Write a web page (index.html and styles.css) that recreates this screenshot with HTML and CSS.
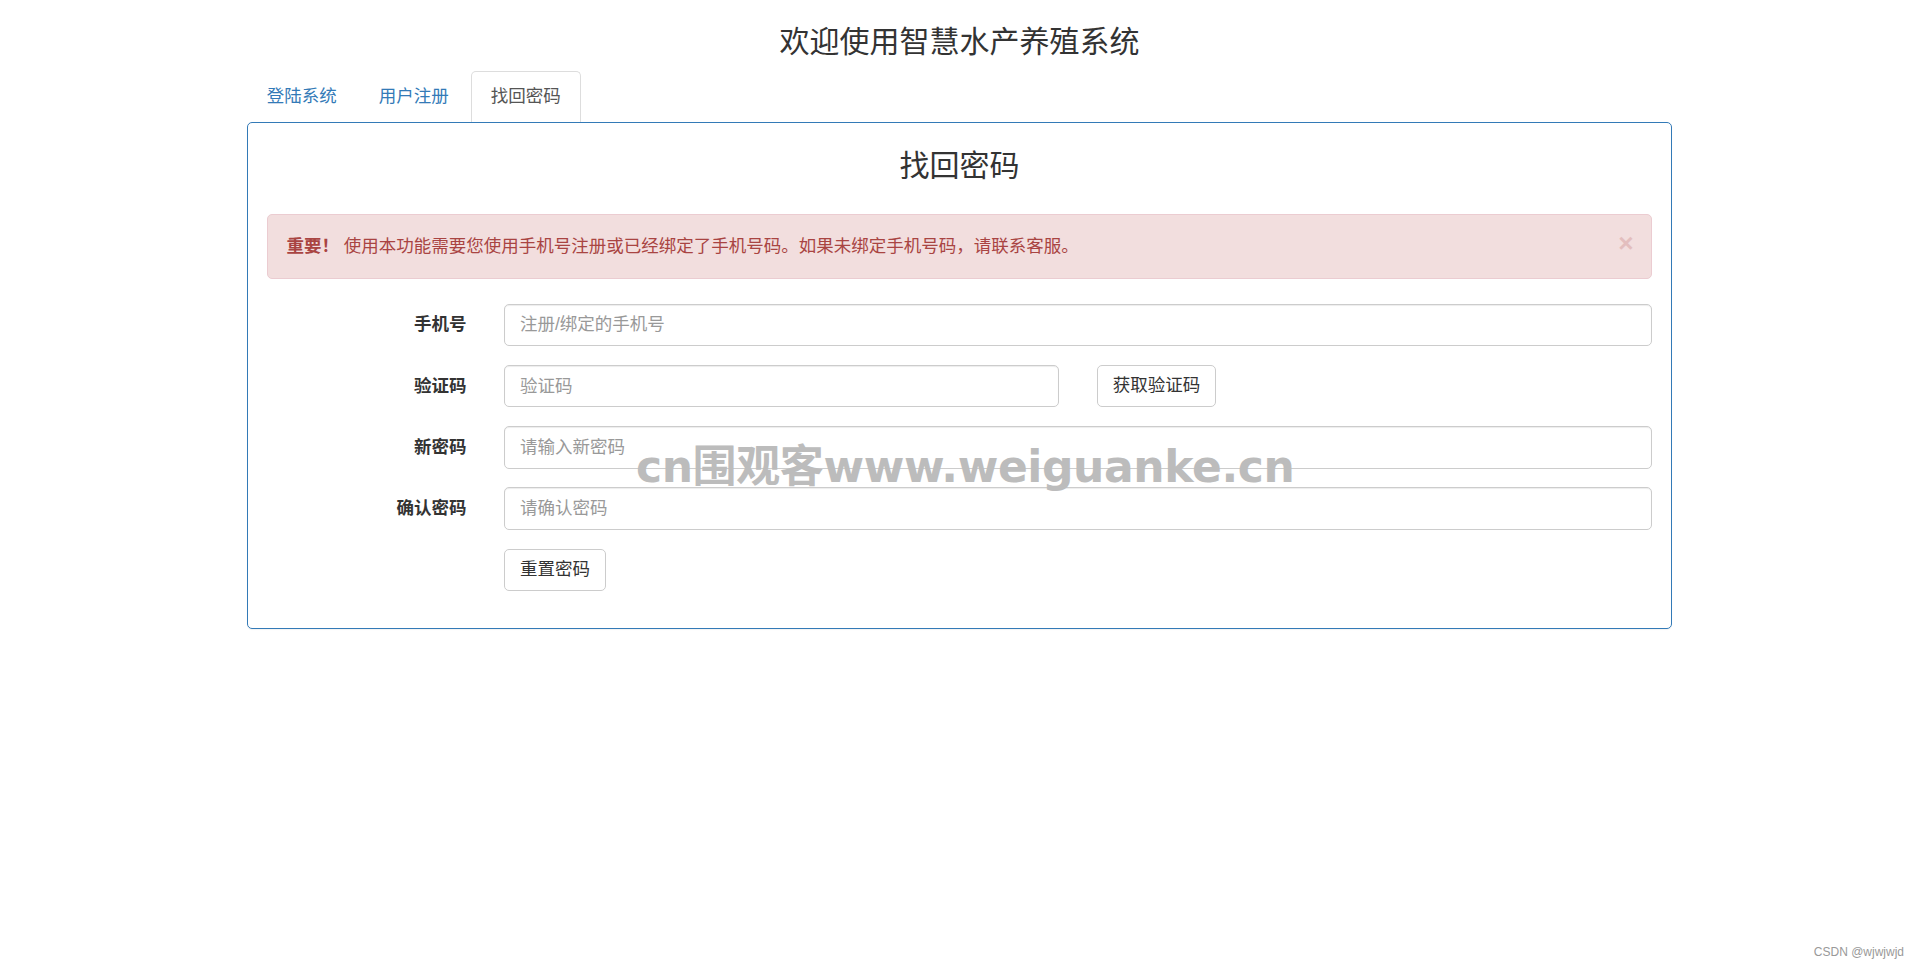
FILE: index.html
```html
<!DOCTYPE html>
<html lang="zh-CN">
<head>
<meta charset="utf-8">
<title>找回密码</title>
<link rel="stylesheet" href="styles.css">
</head>
<body>
<div class="page">
  <h3 class="site-title">欢迎使用智慧水产养殖系统</h3>
  <ul class="nav-tabs">
    <li><a href="#">登陆系统</a></li>
    <li><a href="#">用户注册</a></li>
    <li class="active"><a href="#">找回密码</a></li>
  </ul>
  <div class="panel">
    <h3 class="panel-title">找回密码</h3>
    <div class="alert">
      <div class="alert-text"><strong>重要！</strong> 使用本功能需要您使用手机号注册或已经绑定了手机号码。如果未绑定手机号码，请联系客服。</div>
      <button class="close" type="button">×</button>
    </div>
    <form class="form">
      <div class="form-group">
        <label class="label">手机号</label>
        <div class="col col-10"><input class="input" type="text" placeholder="注册/绑定的手机号"></div>
      </div>
      <div class="form-group">
        <label class="label">验证码</label>
        <div class="col col-5"><input class="input" type="text" placeholder="验证码"></div>
        <div class="col col-5"><button class="btn" type="button">获取验证码</button></div>
      </div>
      <div class="form-group">
        <label class="label">新密码</label>
        <div class="col col-10"><input class="input" type="password" placeholder="请输入新密码"></div>
      </div>
      <div class="form-group">
        <label class="label">确认密码</label>
        <div class="col col-10"><input class="input" type="password" placeholder="请确认密码"></div>
      </div>
      <div class="form-group">
        <div class="label"></div>
        <div class="col col-10"><button class="btn" type="button">重置密码</button></div>
      </div>
    </form>
  </div>
</div>
<div class="watermark">cn围观客www.weiguanke.cn</div>
<div class="csdn">CSDN @wjwjwjd</div>
</body>
</html>
```
FILE: styles.css
```css
* { box-sizing: border-box; }
html, body { margin: 0; padding: 0; background: #fff; }
body {
  font-family: "Liberation Sans", "Noto Sans CJK SC", sans-serif;
  font-size: 17.5px;
  line-height: 25px;
  color: #333;
  position: relative;
  min-height: 969px;
}
.page {
  width: 1425px;
  margin: 0 auto;
}
.site-title {
  font-size: 30px;
  line-height: 33px;
  font-weight: 400;
  text-align: center;
  margin: 25px 0 12.5px;
  color: #333;
}
.nav-tabs {
  list-style: none;
  margin: 0;
  padding: 0;
  display: flex;
}
.nav-tabs li { margin-right: 2.5px; }
.nav-tabs a {
  display: block;
  padding: 12.5px 18.75px;
  line-height: 25px;
  border: 1px solid transparent;
  border-bottom: 0;
  border-radius: 5px 5px 0 0;
  color: #337ab7;
  text-decoration: none;
}
.nav-tabs .active a {
  color: #555;
  background: #fff;
  border-color: #ddd;
}
.panel {
  border: 1px solid #337ab7;
  border-radius: 5px;
  box-shadow: 0 1px 1px rgba(0,0,0,.05);
  padding: 0 18.75px 18.75px;
}
.panel-title {
  font-size: 30px;
  line-height: 33px;
  font-weight: 400;
  text-align: center;
  margin: 26.5px 0 32px;
  color: #333;
}
.alert {
  display: flex;
  align-items: flex-start;
  padding: 18.75px;
  background: #f2dede;
  border: 1px solid #ebccd1;
  border-radius: 5px;
  color: #a94442;
  margin-bottom: 25px;
}
.alert-text { flex: 1; }
.alert strong { font-weight: 700; }
.close {
  background: transparent;
  border: 0;
  padding: 0;
  margin: -2.5px -1px 0 0;
  font-family: "Liberation Sans", sans-serif;
  font-size: 26.25px;
  line-height: 25px;
  font-weight: 700;
  color: #a94442;
  opacity: .2;
  cursor: pointer;
}
.form-group {
  display: flex;
  margin: 0 -18.75px 18.75px;
}
.label {
  width: 16.6667%;
  flex: none;
  padding: 8.75px 18.75px 0;
  text-align: right;
  font-weight: 700;
  color: #333;
}
.col {
  flex: none;
  padding: 0 18.75px;
}
.col-10 { width: 83.3333%; }
.col-5 { width: 41.6667%; }
.input {
  display: block;
  width: 100%;
  height: 42.5px;
  padding: 7.5px 15px;
  font-family: inherit;
  font-size: 17.5px;
  line-height: 25px;
  color: #555;
  background: #fff;
  border: 1px solid #ccc;
  border-radius: 5px;
  box-shadow: inset 0 1px 1px rgba(0,0,0,.075);
  outline: none;
}
.input::placeholder { color: #999; }
.btn {
  display: inline-block;
  padding: 7.5px 15px;
  font-family: inherit;
  font-size: 17.5px;
  line-height: 25px;
  color: #333;
  background: #fff;
  border: 1px solid #ccc;
  border-radius: 5px;
  cursor: pointer;
}
.watermark {
  position: absolute;
  left: 636px;
  top: 437px;
  font-family: "DejaVu Sans", "Noto Sans CJK SC", sans-serif;
  font-weight: 700;
  font-size: 44px;
  line-height: 60px;
  color: #bcbcbc;
  letter-spacing: -0.4px;
  white-space: nowrap;
  pointer-events: none;
}
.csdn {
  position: absolute;
  right: 15px;
  bottom: 10px;
  font-family: "Liberation Sans", sans-serif;
  font-size: 12px;
  line-height: 14px;
  color: #999;
}
```
